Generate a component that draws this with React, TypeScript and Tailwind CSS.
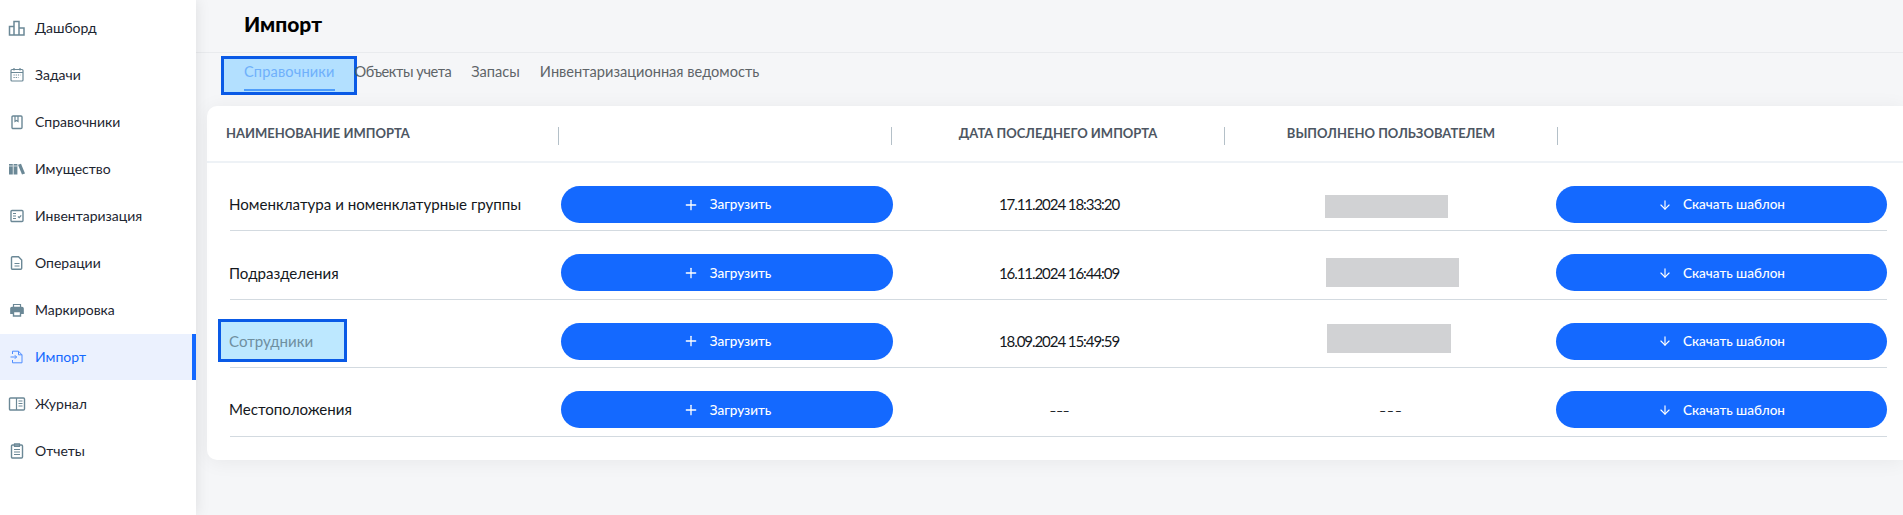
import type { ReactNode } from 'react'
import { Plus, ArrowDown } from 'lucide-react'

const FONT = "font-['Lato','Noto_Sans',sans-serif]"
const GREY = '#6b8896'

function Icon({ children, color = GREY }: { children: ReactNode; color?: string }) {
  return (
    <svg width="18" height="18" viewBox="0 0 18 18" fill="none" stroke={color} strokeWidth="1.2" className="shrink-0">
      {children}
    </svg>
  )
}

const NAV: { label: string; icon: ReactNode }[] = [
  { label: 'Дашборд', icon: <Icon><path d="M1.5 7.5h4.5V16H1.5zM6 2.5h5V16H6zM11 9h5v7h-5z" strokeWidth="1.5" /></Icon> },
  { label: 'Задачи', icon: <Icon><rect x="3" y="3.5" width="12" height="11.5" rx="1" /><path d="M3 6.5h12M6 2v2.5M12 2v2.5" /><path d="M5.5 9h7M5.5 11.5h5" strokeDasharray="1.2 1" /></Icon> },
  { label: 'Справочники', icon: <Icon><rect x="4" y="3" width="10" height="12.5" rx="1" strokeWidth="1.4" /><path d="M7 3v5.5l1.5-1 1.5 1V3" /></Icon> },
  { label: 'Имущество', icon: <Icon><path d="M1 4h3.8v10.5H1zM5.6 4h3.8v10.5H5.6z" fill={GREY} stroke="none" /><path d="M1 6h3.8M5.6 6h3.8" stroke="#fff" strokeWidth="0.7" /><path d="M10 4.8l3-1.1 4 9.8-3 1.1z" fill={GREY} stroke="none" /></Icon> },
  { label: 'Инвентаризация', icon: <Icon><rect x="3" y="3.5" width="12" height="11" rx="1" strokeWidth="1.4" /><path d="M5 6.5h3M5 9h3M5 11.5h3M10 9.5l1.2 1.2 2-2.4" /></Icon> },
  { label: 'Операции', icon: <Icon><path d="M4.5 2.8h6l3.2 3.2v8.2a1 1 0 0 1-1 1h-8.2a1 1 0 0 1-1-1v-10.4a1 1 0 0 1 1-1z" strokeWidth="1.4" /><path d="M6.5 9.5h5M6.5 12h5" /></Icon> },
  { label: 'Маркировка', icon: <Icon><path d="M5.5 6V3.5h7V6" /><path d="M5 12.5H2.8V7.5a1.2 1.2 0 0 1 1.2-1.2h10a1.2 1.2 0 0 1 1.2 1.2v5H13" fill={GREY} /><path d="M5.5 10.5h7v4.5h-7z" fill="#fff" strokeWidth="1.4" /></Icon> },
  { label: 'Импорт', icon: <Icon color="#4f8dff"><path d="M4.5 6V3.2h6L14 6.8v8H4.5V12" strokeWidth="1" /><path d="M10.5 3.2v3.6H14M2.5 9h6M6.8 7.2 8.6 9l-1.8 1.8" strokeWidth="1" /></Icon> },
  { label: 'Журнал', icon: <Icon><rect x="1.5" y="3" width="15" height="12" rx="1" strokeWidth="1.4" /><path d="M8.5 3v12M10.5 6h4M10.5 8.5h4M10.5 11h4" /></Icon> },
  { label: 'Отчеты', icon: <Icon><rect x="3.5" y="3" width="11" height="13" rx="1" strokeWidth="1.4" /><path d="M6.5 1.8h5v2.6h-5zM6 7.5h6M6 10h6M6 12.5h6" /></Icon> },
]

const TABS = [
  { label: 'Справочники', cls: 'tracking-[0.01em] text-[#6fb0fb]' },
  { label: 'Объекты учета', cls: 'tracking-[-0.03em]' },
  { label: 'Запасы', cls: '' },
  { label: 'Инвентаризационная ведомость', cls: '' },
]

const ROWS: { name: string; date?: string; user?: string; marked?: boolean }[] = [
  { name: 'Номенклатура и номенклатурные группы', date: '17.11.2024 18:33:20', user: 'w-[123px] h-[23px] mt-[4px] mr-[8px]' },
  { name: 'Подразделения', date: '16.11.2024 16:44:09', user: 'w-[133px] h-[29px] mt-[-1px] ml-[3px]' },
  { name: 'Сотрудники', date: '18.09.2024 15:49:59', user: 'w-[124px] h-[29px] mt-[-6px] mr-[4px]', marked: true },
  { name: 'Местоположения' },
]

function Dashes() {
  return <span className="text-[21px] font-light">---</span>
}

function BlueButton({ icon, label }: { icon: ReactNode; label: string }) {
  return (
    <button className="flex h-[37px] w-full items-center justify-center gap-[11px] rounded-full bg-[#1469ff] text-[13.5px] font-medium text-white">
      {icon}
      {label}
    </button>
  )
}

function HeadCell({ label, width }: { label?: string; width: string }) {
  return (
    <div className={`flex h-full items-center ${width}`}>
      <span className="flex-1 text-center text-[13px] font-bold text-[#4d5662] uppercase">{label}</span>
      <span className="mt-[5px] h-[18px] w-px bg-[#b4c0c8]" />
    </div>
  )
}

export default function App() {
  return (
    <div className={`flex h-[515px] overflow-hidden bg-[#f5f6f8] ${FONT}`}>
      <aside className="z-10 flex w-[196px] shrink-0 flex-col gap-px bg-white pt-[5px] shadow-[0_0_14px_rgba(0,0,0,0.1)]">
        {NAV.map((item) => {
          const active = item.label === 'Импорт'
          return (
            <div
              key={item.label}
              className={`flex h-[46px] items-center gap-[9px] pb-[1px] pl-[8px] text-[14px] ${active ? 'border-r-4 border-[#1469ff] bg-[#ebf1fe] text-[#1469ff]' : 'text-[#1c2530]'}`}
            >
              {item.icon}
              {item.label}
            </div>
          )
        })}
      </aside>

      <main className="flex min-w-0 flex-1 flex-col">
        <header className="flex h-[53px] shrink-0 items-center border-b border-[#e9ebee] pb-[4px] pl-[48px]">
          <h1 className="text-[21px] font-black text-black">Импорт</h1>
        </header>

        <nav className="flex h-[38px] shrink-0 gap-[20px] pl-[48px] text-[14.6px] text-[#5e6468]">
          {TABS.map((tab, i) => (
            <div key={tab.label} className="relative flex h-full items-center">
              {i === 0 && (
                <span className="absolute top-[3px] right-[-22px] bottom-[-4px] left-[-23px] border-[3px] border-[#0a5ae6] bg-[#b3e0ff]" />
              )}
              <span className={`relative ${tab.cls}`}>{tab.label}</span>
              {i === 0 && <span className="absolute right-0 bottom-0 left-0 h-[2px] bg-[#4f9dfb]" />}
            </div>
          ))}
        </nav>

        <section className="mt-[15px] ml-[11px] h-[354px] rounded-l-[10px] bg-white shadow-[0_2px_20px_rgba(0,0,0,0.06)]">
          <div className="flex h-[57px] border-b-2 border-[#eef2f6]">
            <div className="flex h-full w-[352px] items-center">
              <span className="flex-1 pl-[19px] text-[13px] font-bold text-[#4d5662] uppercase">Наименование импорта</span>
              <span className="mt-[5px] h-[18px] w-px bg-[#b4c0c8]" />
            </div>
            <HeadCell width="w-[333px]" />
            <HeadCell label="Дата последнего импорта" width="w-[333px]" />
            <HeadCell label="Выполнено пользователем" width="w-[333px]" />
          </div>

          <div className="pl-[23px]">
            {ROWS.map((row) => (
              <div
                key={row.name}
                className="grid h-[68.4px] w-[1657px] grid-cols-[331px_332px_332px_331px_331px] items-start border-b border-[#d3dae0] pt-[23px] text-[15.1px] text-[#14181d]"
              >
                <div className="relative flex h-[37px] items-center">
                  {row.marked && (
                    <span className="absolute top-[-4px] right-[214px] bottom-[-2px] left-[-12px] border-[3px] border-[#0a5ae6] bg-[#bde8ff]" />
                  )}
                  <span className={`relative -ml-px ${row.marked ? 'text-[#6f8f9f]' : ''}`}>{row.name}</span>
                </div>
                <BlueButton icon={<Plus size={16} />} label="Загрузить" />
                <div className="flex h-[37px] items-center justify-center tracking-[-1.1px]">
                  {row.date ?? <Dashes />}
                </div>
                <div className="flex h-[37px] items-center justify-center">
                  {row.user ? <span className={`bg-[#d1d2d4] ${row.user}`} /> : <Dashes />}
                </div>
                <BlueButton icon={<ArrowDown size={14} />} label="Скачать шаблон" />
              </div>
            ))}
          </div>
        </section>
      </main>
    </div>
  )
}
